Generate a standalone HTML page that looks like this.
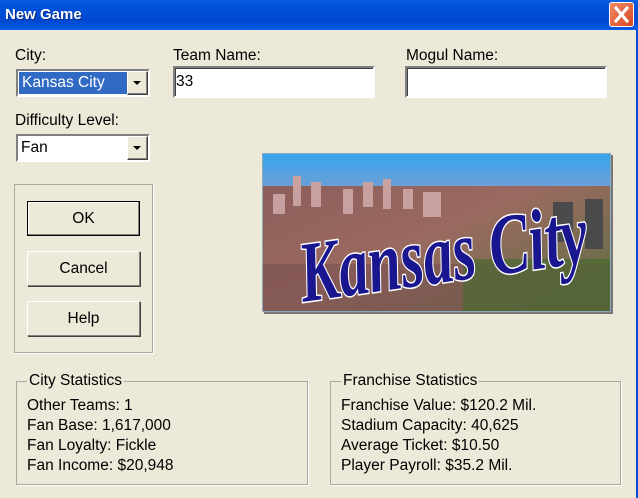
<!DOCTYPE html>
<html><head><style>
*{margin:0;padding:0;box-sizing:border-box}
body{width:638px;height:498px;background:#ECE9D8;position:relative;overflow:hidden;font-family:"Liberation Sans",Arial,sans-serif;font-size:15.5px;color:#000}
.a{position:absolute}
#title{left:0;top:0;width:638px;height:30px;background:linear-gradient(#0A5FE0,#0152DA 20%,#0148D0 70%,#0A5CE6);}
#title span{position:absolute;left:5px;top:6px;color:#fff;font-weight:bold;font-size:15px;text-shadow:1px 1px #0A2A80}
#close{left:609px;top:2px;width:25px;height:25px;background:linear-gradient(135deg,#F08868,#D8481E);border:1px solid #fff;border-radius:3px}
#rb{left:636px;top:30px;width:2px;height:468px;background:#0A4BD0}
.lbl{position:absolute;font-size:15.5px}
.inp{position:absolute;background:#fff;border:2px solid;border-color:#808080 #fff #fff #808080;box-shadow:inset 1px 1px #404040}
.combo{position:absolute;background:#fff;border:2px solid;border-color:#808080 #fff #fff #808080}
.dd{position:absolute;right:0;top:0;bottom:0;width:21px;background:#ECE9D8;border:1px solid;border-color:#fff #404040 #404040 #fff;box-shadow:inset -1px -1px #808080}
.dd:after{content:"";position:absolute;left:5px;top:9px;border-left:4px solid transparent;border-right:4px solid transparent;border-top:4px solid #000}
.btn{position:absolute;left:27px;width:113px;height:35px;background:#ECE9D8;border:1px solid;border-color:#fff #808080 #808080 #fff;box-shadow:1px 1px #404040;text-align:center;line-height:33px;font-size:15.5px}
.grp{position:absolute;border:1px solid #A8A8A0;box-shadow:1px 1px #fff}
.gt{position:absolute;top:-10px;left:10px;background:#ECE9D8;padding:0 2px;font-size:15.5px}
.st{position:absolute;font-size:15.5px;line-height:20px}
</style></head><body>
<div class="a" id="title"><span>New Game</span></div>
<div class="a" id="close"><svg width="23" height="23"><path d="M6 5L17 18M17 5L6 18" stroke="#fff" stroke-width="3" stroke-linecap="square"/></svg></div>
<div class="a" id="rb"></div>

<div class="lbl" style="left:15px;top:47px">City:</div>
<div class="combo" style="left:16px;top:69px;width:134px;height:28px"><div class="a" style="left:1px;top:1px;width:109px;height:22px;background:#316AC5;color:#fff;font-size:15.5px;line-height:22px;padding-left:3px">Kansas City</div><div class="dd"></div></div>

<div class="lbl" style="left:173px;top:47px">Team Name:</div>
<div class="inp" style="left:173px;top:66px;width:202px;height:32px"><span style="position:absolute;left:1px;top:5px;font-size:15.5px">33</span></div>
<div class="lbl" style="left:406px;top:47px">Mogul Name:</div>
<div class="inp" style="left:405px;top:66px;width:202px;height:32px"></div>

<div class="lbl" style="left:15px;top:112px">Difficulty Level:</div>
<div class="combo" style="left:16px;top:134px;width:134px;height:28px"><span style="position:absolute;left:3px;top:3px;font-size:15.5px">Fan</span><div class="dd"></div></div>

<div class="grp" style="left:14px;top:184px;width:139px;height:169px"></div>
<div class="btn" style="top:201px;border:1px solid #000;box-shadow:inset -1px -1px #808080, inset 1px 1px #fff">OK</div>
<div class="btn" style="top:251px">Cancel</div>
<div class="btn" style="top:301px">Help</div>

<div class="a" style="left:262px;top:153px;width:349px;height:159px;overflow:hidden;border:1px solid #8ab;box-shadow:2px 2px #777">
<svg width="349" height="159">
<defs>
<linearGradient id="sky" x1="0" y1="0" x2="0" y2="1"><stop offset="0" stop-color="#36A4EC"/><stop offset="1" stop-color="#6CA0D8"/></linearGradient>
<linearGradient id="city" x1="0" y1="0" x2="1" y2="1"><stop offset="0" stop-color="#8a5a5a"/><stop offset="0.5" stop-color="#9a6a60"/><stop offset="1" stop-color="#5a7040"/></linearGradient>
</defs>
<rect width="349" height="159" fill="url(#city)"/>
<rect width="349" height="32" fill="url(#sky)"/>
<g fill="#c8a0a0"><rect x="30" y="22" width="8" height="30"/><rect x="48" y="28" width="10" height="25"/><rect x="100" y="28" width="10" height="25"/><rect x="120" y="25" width="8" height="30"/><rect x="160" y="38" width="18" height="25"/><rect x="140" y="35" width="10" height="20"/><rect x="10" y="40" width="12" height="20"/><rect x="80" y="35" width="10" height="25"/></g>
<g fill="#4a4a4a"><rect x="290" y="48" width="20" height="40"/><rect x="322" y="45" width="18" height="50"/></g>
<rect x="0" y="110" width="349" height="49" fill="#7a5050" opacity=".6"/>
<rect x="200" y="105" width="149" height="54" fill="#4a6a30" opacity=".7"/>
<text x="180" y="128" text-anchor="middle" font-family="Liberation Serif,serif" font-style="italic" font-weight="bold" font-size="86" fill="#1A1690" stroke="#fff" stroke-width="3" paint-order="stroke" transform="rotate(-8 180 100)" textLength="290" lengthAdjust="spacingAndGlyphs">Kansas City</text>
</svg></div>

<div class="grp" style="left:16px;top:381px;width:292px;height:104px"><div class="gt">City Statistics</div></div>
<div class="st" style="left:27px;top:396px">Other Teams: 1<br>Fan Base: 1,617,000<br>Fan Loyalty: Fickle<br>Fan Income: $20,948</div>
<div class="grp" style="left:330px;top:381px;width:291px;height:104px"><div class="gt">Franchise Statistics</div></div>
<div class="st" style="left:341px;top:396px">Franchise Value: $120.2 Mil.<br>Stadium Capacity: 40,625<br>Average Ticket: $10.50<br>Player Payroll: $35.2 Mil.</div>
</body></html>
